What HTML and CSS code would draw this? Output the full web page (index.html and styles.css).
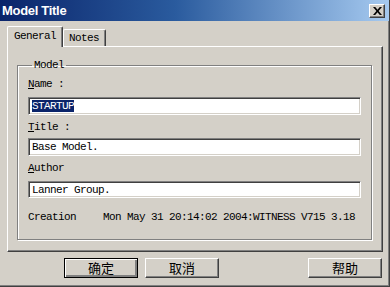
FILE: index.html
```html
<!DOCTYPE html>
<html lang="en">
<head>
  <meta charset="UTF-8">
  <title>Model Title</title>
  <link rel="stylesheet" href="styles.css">
</head>
<body>
  <div class="window">
    <div class="titlebar">
      <span class="title">Model Title</span>
      <div class="close">
        <svg width="9" height="8" viewBox="0 0 9 8"><path d="M0 0h2.2l2.3 2.8L6.8 0H9L5.6 4 9 8H6.8L4.5 5.2 2.2 8H0l3.4-4z" fill="#000"/></svg>
      </div>
    </div>
    <div class="client">
      <div class="tabs">
        <div class="tab active">General</div>
        <div class="tab">Notes</div>
      </div>
      <div class="panel">
        <fieldset class="group">
          <legend>Model</legend>
          <div class="label first"><u>N</u>ame :</div>
          <div class="field"><span class="sel">STARTUP</span></div>
          <div class="label"><u>T</u>itle :</div>
          <div class="field field-title">Base Model.</div>
          <div class="label label-author"><u>A</u>uthor</div>
          <div class="field field-author">Lanner Group.</div>
          <div class="creation">
            <span class="creation-key">Creation</span>
            <span>Mon May 31 20:14:02 2004:WITNESS V715 3.18</span>
          </div>
        </fieldset>
      </div>
      <div class="buttons">
        <button class="btn default">确定</button>
        <button class="btn">取消</button>
        <button class="btn help">帮助</button>
      </div>
    </div>
  </div>
</body>
</html>
```

FILE: styles.css
```css
* { margin: 0; padding: 0; box-sizing: border-box; }
body {
  width: 390px;
  height: 287px;
  background: #d4d0c8;
  font-family: "Liberation Mono", monospace;
  font-size: 11px;
  letter-spacing: -0.6px;
  color: #000;
  overflow: hidden;
}
.window {
  width: 390px;
  height: 287px;
  border-right: 1px solid #404040;
  border-bottom: 1px solid #404040;
  box-shadow: inset -1px -1px 0 #808080;
}
.titlebar {
  height: 21px;
  background: linear-gradient(to right, #0a246a, #2a5b9e 45%, #a6caf0);
  display: flex;
  align-items: center;
  justify-content: space-between;
  padding: 0 4px 0 2px;
}
.title {
  font-family: "Liberation Sans", Arial, sans-serif;
  font-weight: bold;
  font-size: 13px;
  letter-spacing: -0.3px;
  color: #fff;
}
.close {
  width: 16px;
  height: 14px;
  background: #d4d0c8;
  border-top: 1px solid #fff;
  border-left: 1px solid #fff;
  border-right: 1px solid #404040;
  border-bottom: 1px solid #404040;
  box-shadow: inset -1px -1px 0 #808080;
  display: flex;
  align-items: center;
  justify-content: center;
  margin-top: 1px;
}
.client {
  padding: 5px 6px 0 7px;
}
.tabs {
  display: flex;
  align-items: flex-end;
  height: 20px;
}
.tab {
  height: 17px;
  padding: 2px 6px 0 5px;
  border-top: 1px solid #fff;
  border-left: 1px solid #fff;
  border-right: 1px solid #404040;
  box-shadow: inset -1px 0 0 #808080;
  border-radius: 2px 2px 0 0;
}
.tab.active {
  height: 21px;
  width: 56px;
  padding: 3px 0 0 6px;
  margin-bottom: -1px;
  position: relative;
  z-index: 1;
  background: #d4d0c8;
}
.panel {
  height: 206px;
  border-top: 1px solid #fff;
  border-left: 1px solid #fff;
  border-right: 1px solid #404040;
  border-bottom: 1px solid #404040;
  box-shadow: inset -1px -1px 0 #808080;
  padding: 11px 10px 0 9px;
}
.group {
  height: 182px;
  border: 1px solid #808080;
  box-shadow: inset 1px 1px 0 #fff, 1px 1px 0 #fff;
  padding: 0 10px 0 10px;
}
.group legend {
  padding: 0 2px;
  margin-left: 4px;
  line-height: 14px;
}
.label {
  height: 14px;
  line-height: 14px;
  margin-top: 5px;
}
.label.first { margin-top: 5px; }
.field {
  height: 18px;
  margin-top: 6px;
  background: #fff;
  border-top: 1px solid #808080;
  border-left: 1px solid #808080;
  border-right: 1px solid #fff;
  border-bottom: 1px solid #fff;
  box-shadow: inset 1px 1px 0 #404040, inset -1px -1px 0 #d4d0c8;
  padding: 2px 3px 0 3px;
  line-height: 13px;
}
.field-title { margin-top: 4px; }
.label-author { margin-top: 5px; }
.field-author { margin-top: 6px; height: 17px; }
.sel {
  background: #0a246a;
  color: #fff;
}
.creation {
  display: flex;
  height: 14px;
  line-height: 14px;
  margin-top: 12px;
}
.creation-key { width: 75px; }
.buttons {
  display: flex;
  gap: 7px;
  padding: 6px 1px 0 57px;
}
.btn {
  width: 74px;
  height: 20px;
  background: #d4d0c8;
  font-family: "Noto Sans CJK SC", sans-serif;
  font-size: 13px;
  letter-spacing: 0;
  line-height: 16px;
  border-top: 1px solid #fff;
  border-left: 1px solid #fff;
  border-right: 1px solid #404040;
  border-bottom: 1px solid #404040;
  box-shadow: inset -1px -1px 0 #808080;
}
.btn.default {
  border: 1px solid #000;
  box-shadow: inset 1px 1px 0 #fff, inset -2px -2px 0 #808080;
}
.btn.help { margin-left: auto; }
```
